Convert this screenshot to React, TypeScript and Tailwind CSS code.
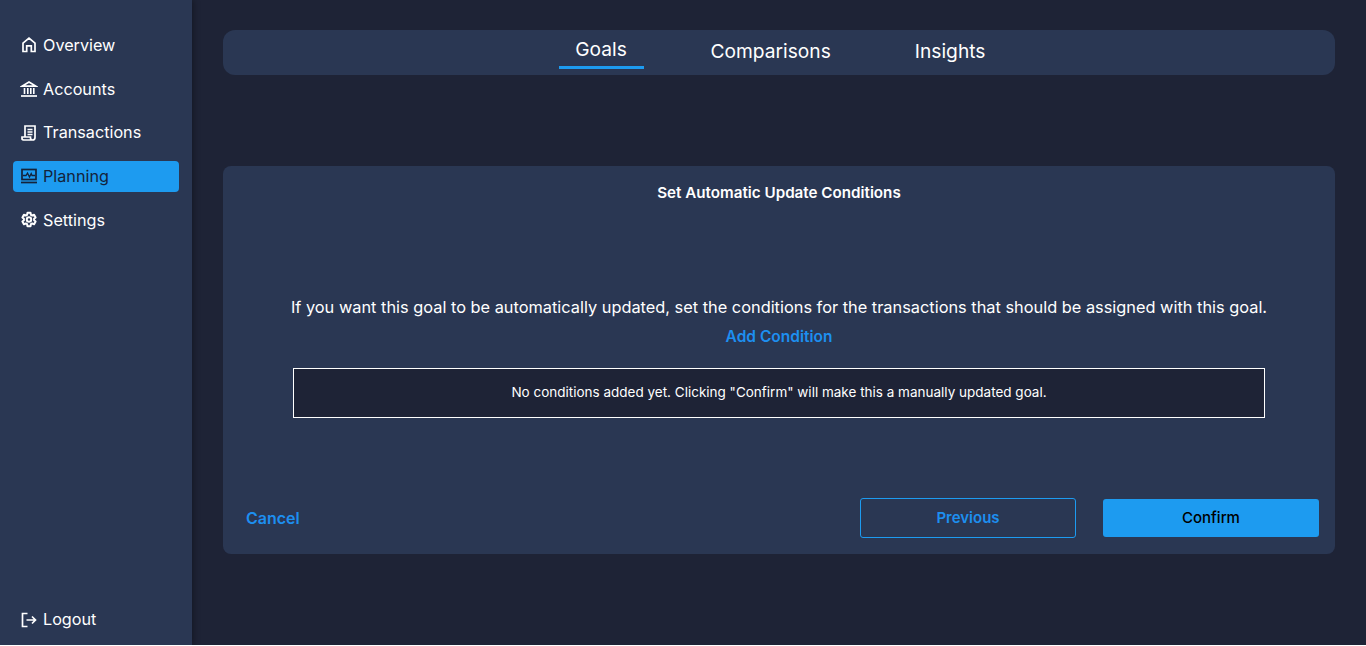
import type { ReactNode } from "react";

function Icon({ children }: { children: ReactNode }) {
  return (
    <svg viewBox="0 0 18 18" fill="none" stroke="currentColor" strokeWidth="1.7" className="h-[18px] w-[18px] shrink-0">
      {children}
    </svg>
  );
}

const navItems = [
  {
    label: "Overview",
    icon: (
      <Icon>
        <path d="M3 15.5V7.2L9 2.2l6 5v8.3h-3.7V9.8H6.7v5.7z" />
      </Icon>
    ),
  },
  {
    label: "Accounts",
    icon: (
      <Icon>
        <path d="M2 6.2 9 2l7 4.2z" />
        <path d="M4.5 8v6M7.8 8v6M10.8 8v6M13.8 8v6" strokeWidth="1.6" />
        <path d="M1 16h16" />
      </Icon>
    ),
  },
  {
    label: "Transactions",
    icon: (
      <Icon>
        <path d="M5 13V2h10v11.5a2.5 2.5 0 0 1-2.5 2.5H3.5A1.8 1.8 0 0 1 2 14v-1h8.5v1a2 2 0 0 0 2 2" />
        <path d="M7.5 5.5h5M7.5 8h5M7.5 10.5h5" strokeWidth="1.3" />
      </Icon>
    ),
  },
  {
    label: "Planning",
    active: true,
    icon: (
      <Icon>
        <rect x="2" y="2.5" width="14" height="10" />
        <path d="M3 8.5h3l1.5-2.5 2 4 1.7-3.5.8 2H15" strokeWidth="1.3" />
        <path d="M1 15.5h16" />
      </Icon>
    ),
  },
  {
    label: "Settings",
    icon: (
      <Icon>
        <path
          d="M7.5 1.8h3l.4 2 1.3.7 1.9-.7 1.5 2.6-1.5 1.3v1.6l1.5 1.3-1.5 2.6-1.9-.7-1.3.7-.4 2h-3l-.4-2-1.3-.7-1.9.7-1.5-2.6 1.5-1.3V7.7L2.4 6.4l1.5-2.6 1.9.7 1.3-.7z"
          strokeWidth="2"
          strokeLinejoin="round"
        />
        <circle cx="9" cy="8.5" r="2.2" strokeWidth="2" />
      </Icon>
    ),
  },
];

export default function App() {
  return (
    <div className="flex h-[645px] bg-[#1e2336] font-['Inter',sans-serif] text-white">
      {/* Sidebar */}
      <aside className="flex w-[192px] shrink-0 flex-col justify-between bg-[#2a3753] px-[13px] pt-[30px] pb-[10px] shadow-[2px_0_6px_rgba(0,0,0,0.3)]">
        <nav className="flex flex-col gap-[12.75px]">
          {navItems.map((item) => (
            <div
              key={item.label}
              className={`flex h-[31px] items-center gap-[5px] rounded-[4px] pb-[1px] pl-[7px] text-[16.2px] ${
                item.active ? "bg-[#1d9bf0] text-[#14233a]" : "text-white"
              }`}
            >
              {item.icon}
              {item.label}
            </div>
          ))}
        </nav>
        <div className="flex h-[31px] items-center gap-[5px] pl-[7px] text-[16.2px]">
          <Icon>
            <path d="M7.5 2.5H2.5v13h5" />
            <path d="M6.5 9h9M12 5.5 15.5 9 12 12.5" />
          </Icon>
          Logout
        </div>
      </aside>

      {/* Main */}
      <main className="flex-1 px-[31px] pt-[30px]">
        <div className="flex h-[45px] items-center justify-center gap-[51px] rounded-[12px] bg-[#2a3753] pl-[2px] text-[19.2px]">
          <div className="flex h-[37px] w-[85px] -translate-y-[2px] items-center justify-center border-b-[3px] border-[#1d9bf0]">
            Goals
          </div>
          <div className="px-4 pb-[2px]">Comparisons</div>
          <div className="ml-[1px] px-4 pb-[2px]">Insights</div>
        </div>

        <section className="mt-[91px] flex h-[388px] flex-col rounded-[8px] bg-[#2a3753] px-[16px] pt-[16px] pb-[16px]">
          <h2 className="text-center text-[15.2px] font-semibold">Set Automatic Update Conditions</h2>
          <p className="mt-[90px] text-center text-[16.35px]">
            If you want this goal to be automatically updated, set the conditions for the transactions that should be assigned with this goal.
          </p>
          <div className="mt-[6px] text-center text-[15.5px] font-semibold text-[#1d8ff0]">Add Condition</div>
          <div className="mx-auto mt-[19px] flex h-[50px] w-[972px] items-center justify-center border border-white bg-[#1e2336] text-[13.5px]">
            No conditions added yet. Clicking "Confirm" will make this a manually updated goal.
          </div>
          <div className="mt-auto flex items-center justify-between">
            <div className="pl-[7px] text-[16px] font-semibold text-[#1d8ff0]">Cancel</div>
            <div className="flex gap-[27px]">
              <div className="flex h-[40px] w-[216px] items-center justify-center rounded-[3px] border border-[#1d9bf0] text-[15px] font-semibold text-[#1d8ff0]">
                Previous
              </div>
              <div className="flex h-[38px] w-[216px] items-center justify-center self-center rounded-[3px] bg-[#1d9bf0] text-[15px] font-medium text-black">
                Confirm
              </div>
            </div>
          </div>
        </section>
      </main>
    </div>
  );
}
